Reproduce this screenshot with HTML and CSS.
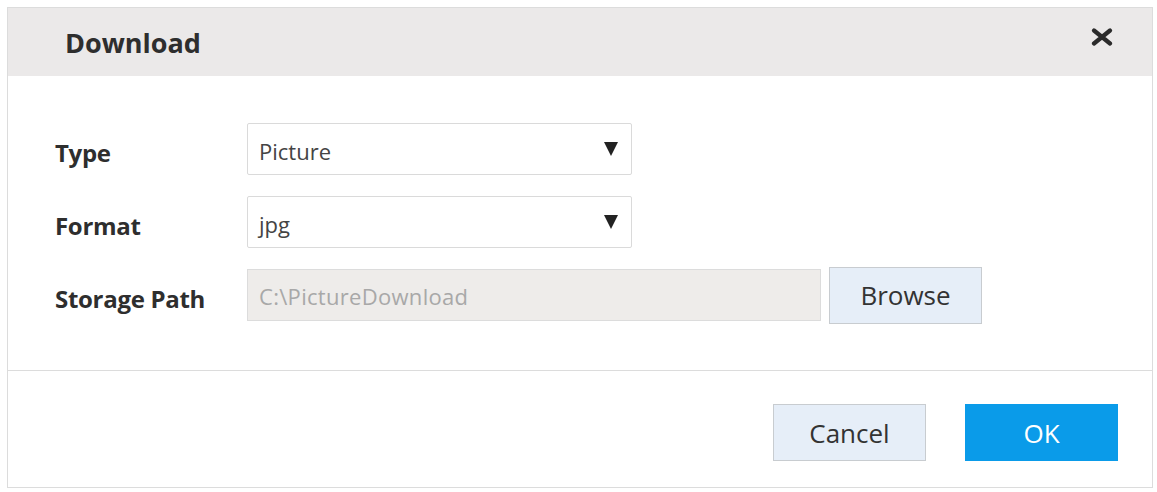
FILE: index.html
```
<!DOCTYPE html>
<html>
<head>
<meta charset="utf-8">
<link rel="stylesheet" href="styles.css">
</head>
<body>
<div class="dialog">
  <div class="header">
    <span class="title">Download</span>
    <span class="close">
      <svg width="24" height="18" viewBox="0 0 24 18"><path d="M4 2.5 L20 15.5 M20 2.5 L4 15.5" stroke="#2b2b2b" stroke-width="4.2" stroke-linecap="round"/></svg>
    </span>
  </div>
  <div class="body">
    <div class="row">
      <div class="label">Type</div>
      <div class="select"><span>Picture</span><span class="arrow"></span></div>
    </div>
    <div class="row">
      <div class="label">Format</div>
      <div class="select"><span>jpg</span><span class="arrow"></span></div>
    </div>
    <div class="row">
      <div class="label">Storage Path</div>
      <div class="path">C:\PictureDownload</div>
      <div class="btn browse">Browse</div>
    </div>
  </div>
  <div class="footer">
    <div class="btn cancel">Cancel</div>
    <div class="btn ok">OK</div>
  </div>
</div>
</body>
</html>
```
FILE: styles.css
```
html, body {
  margin: 0;
  padding: 0;
  background: #ffffff;
}
body {
  font-family: "Open Sans", "Noto Sans", sans-serif;
  color: #333;
}
.dialog {
  margin: 7px 0 0 7px;
  width: 1146px;
  height: 481px;
  box-sizing: border-box;
  border: 1px solid #dcdcdc;
  display: flex;
  flex-direction: column;
  background: #fff;
}
.header {
  height: 68px;
  background: #ebe9e9;
  display: flex;
  align-items: center;
  justify-content: space-between;
  padding: 0 38px 0 57px;
  flex: none;
  box-sizing: border-box;
}
.title {
  font-size: 27px;
  font-weight: 700;
  color: #2e2e2e;
}
.close {
  display: flex;
  margin-top: -10px;
}
.body {
  flex: 1;
  padding: 47px 0 0 47px;
  display: flex;
  flex-direction: column;
  gap: 21px;
}
.row {
  display: flex;
  align-items: center;
  height: 52px;
}
.label {
  width: 192px;
  font-size: 24px;
  font-weight: 700;
  color: #2e2e2e;
  letter-spacing: -0.3px;
  padding-top: 6px;
}
.select {
  width: 385px;
  height: 52px;
  box-sizing: border-box;
  border: 1px solid #dadada;
  border-radius: 2px;
  display: flex;
  align-items: center;
  justify-content: space-between;
  padding: 4px 13px 0 11px;
  font-size: 22px;
  color: #444;
  background: #fff;
}
.arrow {
  width: 0;
  height: 0;
  border-left: 7px solid transparent;
  border-right: 7px solid transparent;
  border-top: 14px solid #222;
  margin-top: -4px;
}
.path {
  width: 574px;
  height: 52px;
  box-sizing: border-box;
  border: 1px solid #dcdcdc;
  background: #eeecea;
  display: flex;
  align-items: center;
  padding: 2px 0 0 11px;
  font-size: 22px;
  color: #a8a8a8;
  letter-spacing: 0.3px;
}
.btn {
  width: 153px;
  height: 57px;
  box-sizing: border-box;
  display: flex;
  align-items: center;
  justify-content: center;
  font-size: 26px;
}
.browse {
  margin-left: 8px;
  border: 1px solid #c8ccd0;
  background: #e6eef8;
  color: #333;
}
.footer {
  flex: none;
  border-top: 1px solid #dcdcdc;
  height: 117px;
  box-sizing: border-box;
  display: flex;
  justify-content: flex-end;
  align-items: flex-start;
  padding: 33px 34px 0 0;
  gap: 39px;
}
.cancel {
  border: 1px solid #c8ccd0;
  background: #e6eef8;
  color: #333;
}
.ok {
  background: #0a9be9;
  color: #fff;
}
```
